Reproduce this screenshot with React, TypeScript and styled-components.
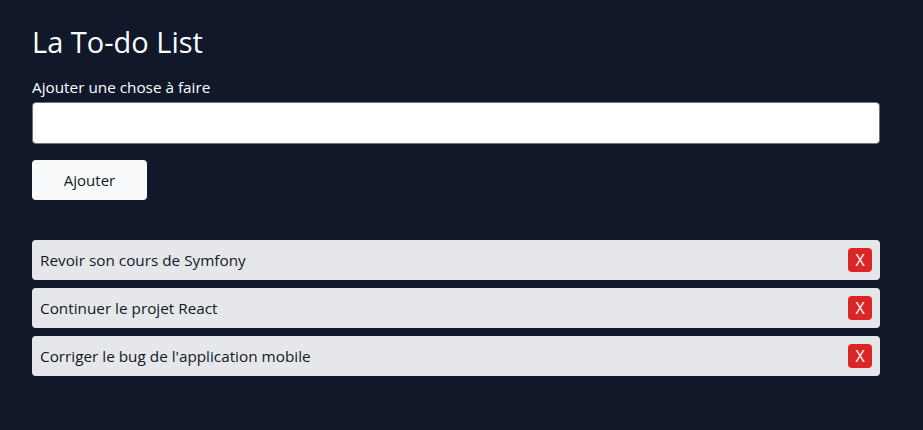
import React, { useState } from "react";
import styled, { createGlobalStyle } from "styled-components";

const GlobalStyle = createGlobalStyle`
  html, body {
    margin: 0;
    background: #10182a;
  }
  body {
    font-family: "Open Sans", "Noto Sans", sans-serif;
  }
`;

type TodoPropsType = {
  text: string;
  onRemove: () => void;
};

function TodoItem(props: TodoPropsType) {
  return (
    <Item>
      <ItemText>{props.text}</ItemText>
      <RemoveButton onClick={props.onRemove}>X</RemoveButton>
    </Item>
  );
}

export default function App() {
  const [todos, setTodos] = useState<string[]>([
    "Revoir son cours de Symfony",
    "Continuer le projet React",
    "Corriger le bug de l'application mobile",
  ]);
  const [value, setValue] = useState("");

  const add = () => {
    if (!value.trim()) return;
    setTodos([...todos, value.trim()]);
    setValue("");
  };

  return (
    <Page>
      <GlobalStyle />
      <Title>La To-do List</Title>
      <Label htmlFor="todo">Ajouter une chose à faire</Label>
      <Input id="todo" value={value} onChange={(e) => setValue(e.target.value)} />
      <AddButton onClick={add}>Ajouter</AddButton>
      <List>
        {todos.map((t, i) => (
          <TodoItem key={i} text={t} onRemove={() => setTodos(todos.filter((_, j) => j !== i))} />
        ))}
      </List>
    </Page>
  );
}

const Page = styled.div`
  min-height: 430px;
  box-sizing: border-box;
  padding: 24px 43px 32px 32px;
  display: flex;
  flex-direction: column;
  color: #fff;
`;

const Title = styled.h1`
  margin: 0;
  font-size: 29px;
  font-weight: 400;
  line-height: 36px;
`;

const Label = styled.label`
  margin-top: 16px;
  font-size: 15.3px;
  line-height: 22px;
`;

const Input = styled.input`
  margin-top: 4px;
  height: 42px;
  box-sizing: border-box;
  border: 1px solid #6b7280;
  border-radius: 4px;
  background: #fff;
  padding: 0 10px;
  font: inherit;
  font-size: 15px;
  outline: none;
`;

const AddButton = styled.button`
  margin-top: 16px;
  width: 115px;
  height: 40px;
  border: none;
  border-radius: 4px;
  background: #f9fafb;
  color: #111827;
  font-family: inherit;
  font-size: 15px;
  cursor: pointer;
`;

const List = styled.ul`
  list-style: none;
  margin: 40px 0 0;
  padding: 0;
  display: flex;
  flex-direction: column;
  gap: 8px;
`;

const Item = styled.li`
  height: 40px;
  display: flex;
  align-items: center;
  justify-content: space-between;
  padding: 0 8px;
  border-radius: 4px;
  background: #e5e7eb;
  color: #111827;
`;

const ItemText = styled.span`
  font-size: 15.3px;
`;

const RemoveButton = styled.button`
  width: 24px;
  height: 24px;
  padding: 0;
  border: none;
  border-radius: 4px;
  background: #dc2626;
  color: #fff;
  font-family: inherit;
  font-size: 16px;
  line-height: 24px;
  cursor: pointer;
`;
